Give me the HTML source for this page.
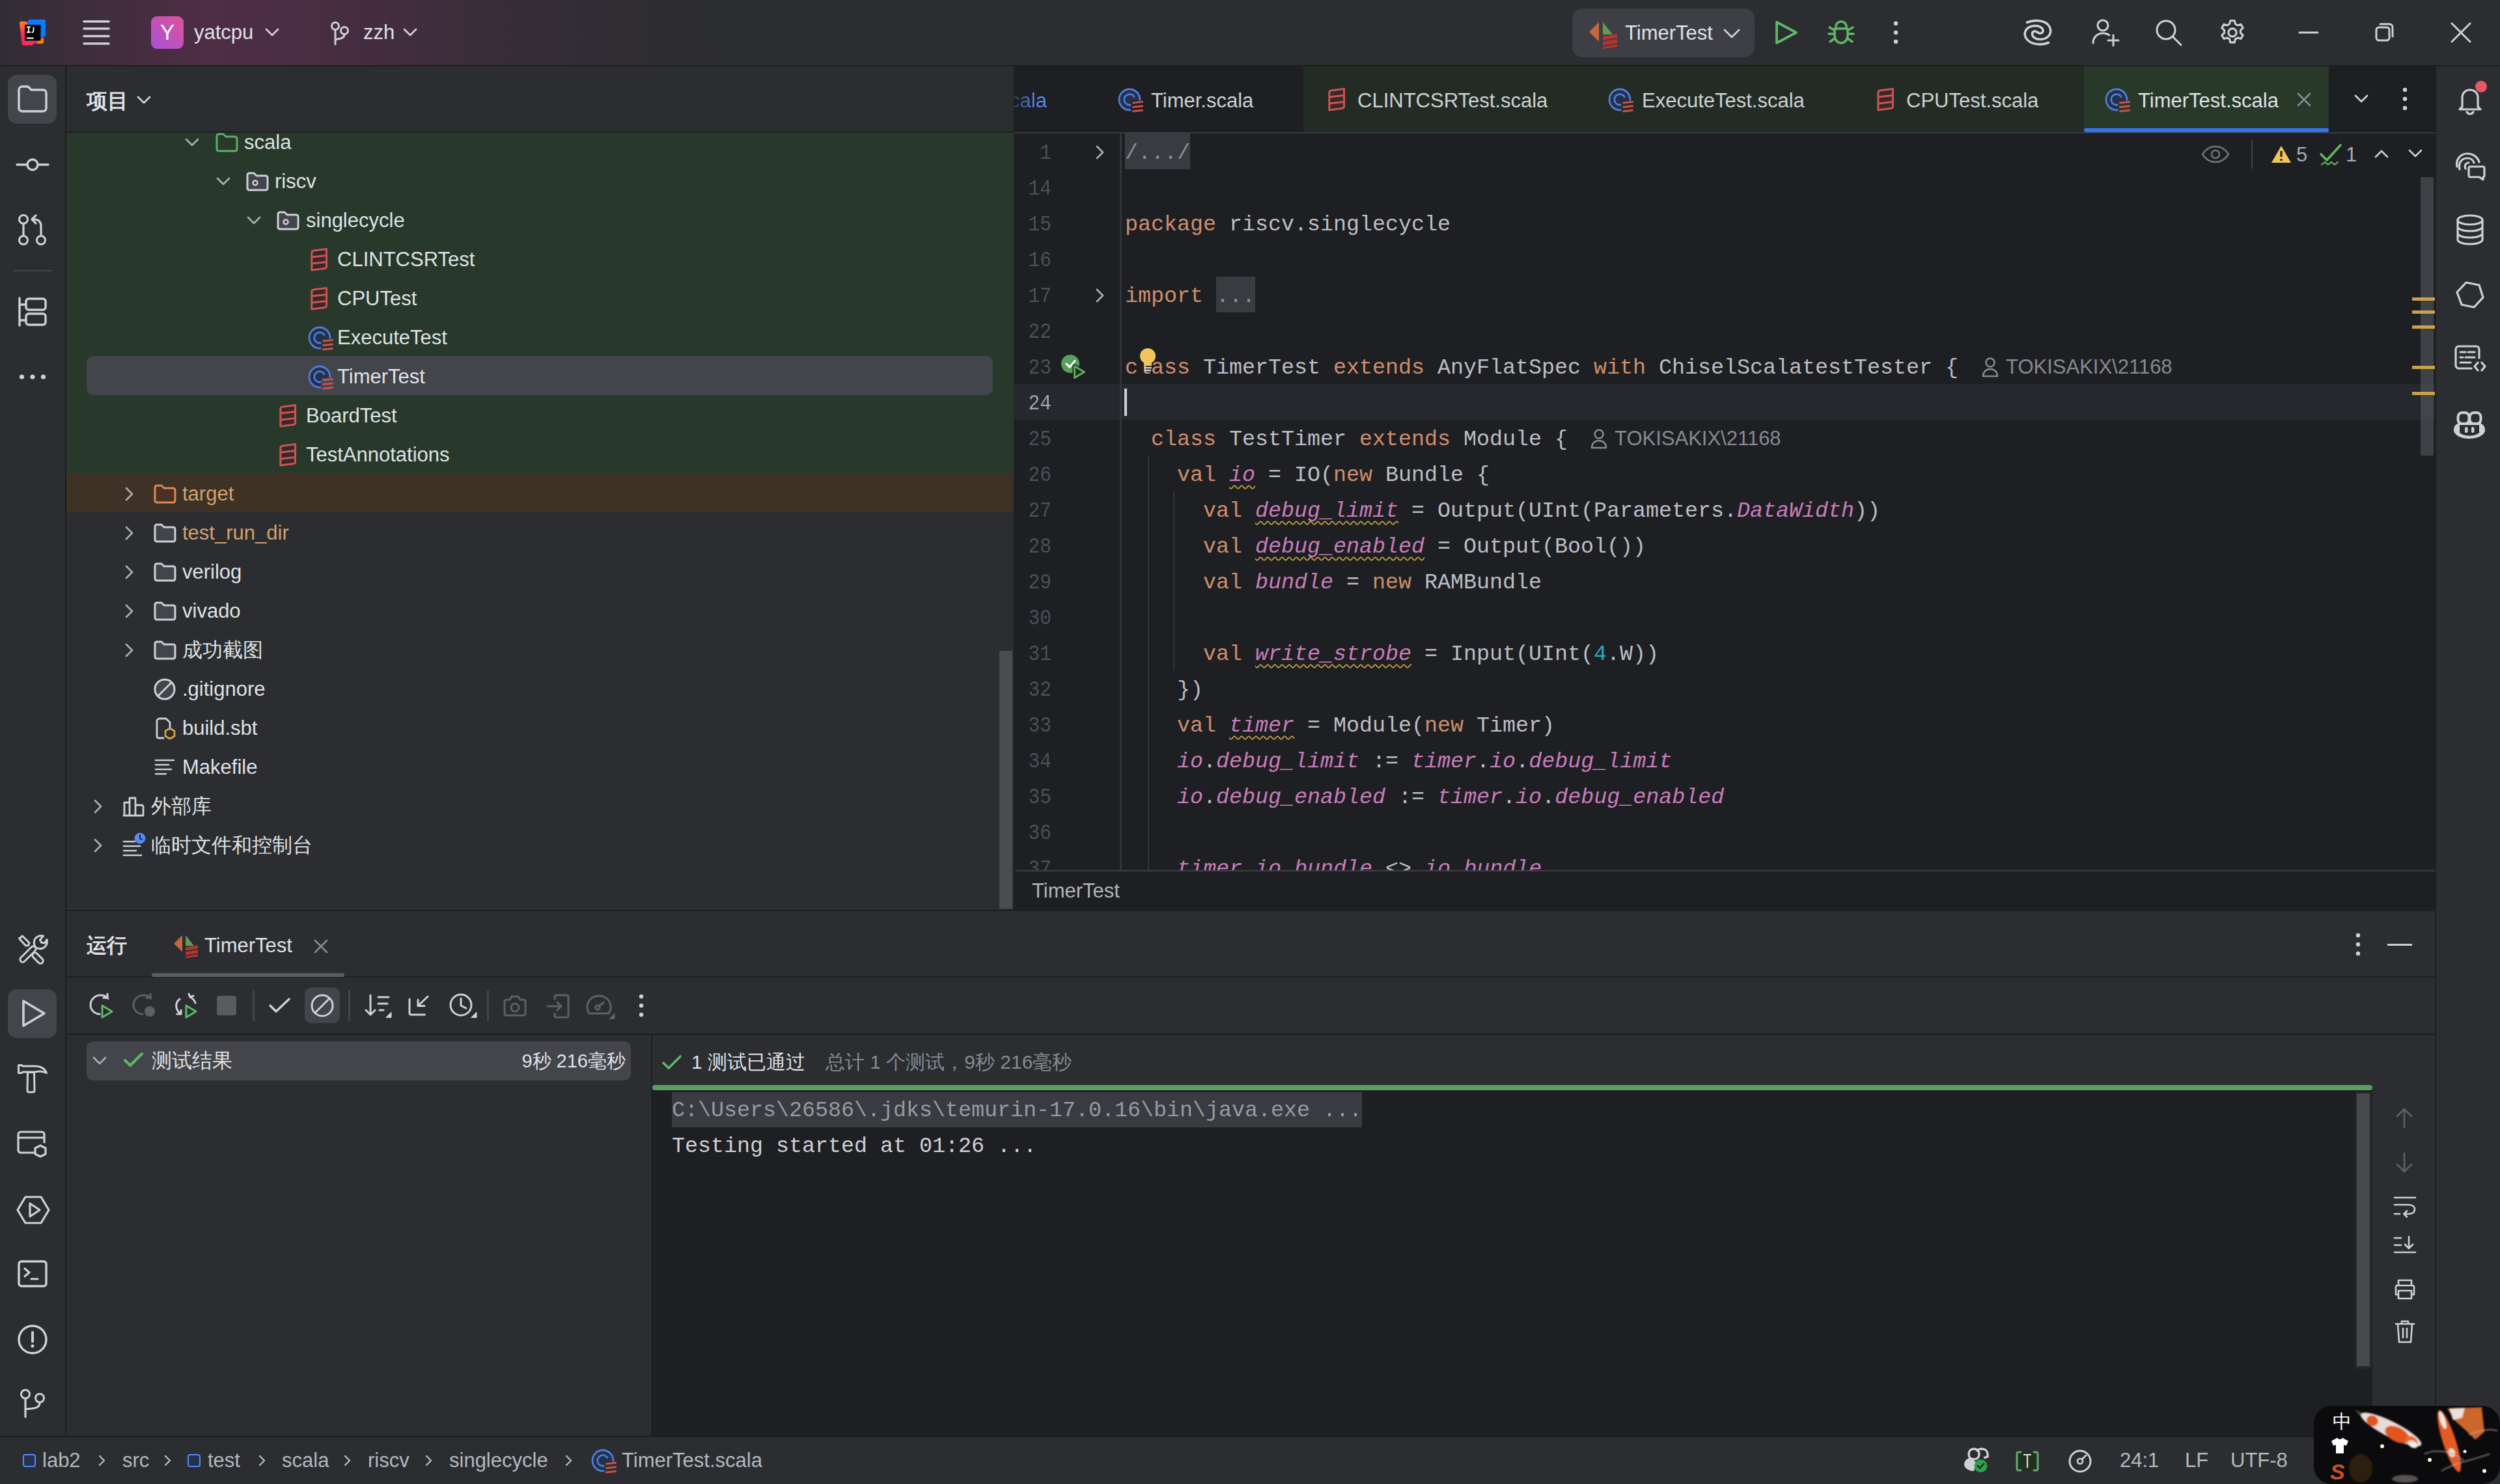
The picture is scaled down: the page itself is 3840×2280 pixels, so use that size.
<!DOCTYPE html><html><head><meta charset="utf-8"><style>
*{margin:0;padding:0;box-sizing:border-box}
html,body{width:3840px;height:2280px;overflow:hidden;background:#2B2D30}
body{position:relative;font-family:"Liberation Sans",sans-serif;color:#DFE1E5}
div,svg,span.a{position:absolute}
.t{white-space:pre}
.m{font-family:"Liberation Mono",monospace;white-space:pre}
</style></head><body><div style="left:0px;top:0px;width:3840px;height:100px;background:#2B2D30;"></div><div style="left:0px;top:0px;width:1300px;height:100px;background:linear-gradient(90deg, rgba(100,45,85,0.12) 0px, rgba(105,45,88,0.30) 130px, rgba(110,45,90,0.52) 320px, rgba(105,45,88,0.45) 520px, rgba(95,45,80,0.25) 760px, rgba(80,45,70,0.08) 1000px, rgba(43,45,48,0) 1150px);"></div><div style="left:0px;top:100px;width:3840px;height:2px;background:#1E1F22;"></div><div style="left:0px;top:102px;width:100px;height:2106px;background:#2B2D30;"></div><div style="left:100px;top:102px;width:2px;height:2106px;background:#1E1F22;"></div><div style="left:102px;top:102px;width:1455px;height:1296px;background:#2B2D30;"></div><div style="left:102px;top:202px;width:1455px;height:2px;background:#1E1F22;"></div><div style="left:102px;top:204px;width:1455px;height:523px;background:#28382B;"></div><div style="left:102px;top:727px;width:1455px;height:60px;background:#3D3225;"></div><div style="left:1557px;top:102px;width:2185px;height:1234px;background:#1E1F22;"></div><div style="left:1557px;top:203px;width:2183px;height:2px;background:#393B40;"></div><div style="left:2002px;top:102px;width:1575px;height:101px;background:#232C24;"></div><div style="left:3201px;top:102px;width:376px;height:101px;background:#283829;"></div><div style="left:3201px;top:197px;width:376px;height:6px;background:#3574F0;border-radius:3px"></div><div style="left:1557px;top:1337px;width:2183px;height:61px;background:#1E1F22;"></div><div style="left:1560px;top:1337px;width:2180px;height:2px;background:#393B40;"></div><div style="left:3740px;top:102px;width:2px;height:2106px;background:#1E1F22;"></div><div style="left:3742px;top:102px;width:98px;height:2106px;background:#2B2D30;"></div><div style="left:102px;top:1398px;width:3638px;height:2px;background:#1E1F22;"></div><div style="left:102px;top:1400px;width:3638px;height:808px;background:#2B2D30;"></div><div style="left:102px;top:1500px;width:3638px;height:2px;background:#1E1F22;"></div><div style="left:102px;top:1588px;width:3638px;height:2px;background:#1E1F22;"></div><div style="left:1000px;top:1590px;width:2px;height:618px;background:#1E1F22;"></div><div style="left:1002px;top:1675px;width:2642px;height:533px;background:#1E1F22;"></div><div style="left:1002px;top:1667px;width:2642px;height:8px;background:#5B9E62;border-radius:4px"></div><div style="left:0px;top:2206px;width:3840px;height:2px;background:#1E1F22;"></div><div style="left:0px;top:2208px;width:3840px;height:72px;background:#2B2D30;"></div><svg style="left:20px;top:20px" width="60" height="60" viewBox="0 0 60 60">
<defs><linearGradient id="lg1" x1="0" y1="0" x2="0.3" y2="1"><stop offset="0" stop-color="#FF8A1E"/><stop offset="0.55" stop-color="#FF2D55"/><stop offset="1" stop-color="#FF2458"/></linearGradient>
<linearGradient id="lg2" x1="1" y1="0" x2="0" y2="1"><stop offset="0.5" stop-color="#087CFA"/><stop offset="1" stop-color="#8D5BD0"/></linearGradient></defs>
<path d="M12 13H20C21.5 13 22 14 22 15L30 49.5H16C14.5 49.5 14 49 13.8 47.5L10 15.5C10 14 10.8 13 12 13Z" fill="url(#lg1)"/>
<path d="M26 10H48C49.2 10 50 10.8 50 12V35L29 48L18 44L23 13C23.3 11 24.5 10 26 10Z" fill="url(#lg2)"/>
<path d="M47 38V44.5C47 46 46 47 44.5 47H35L40 41Z" fill="#FF8100"/>
<path d="M22 44L46.5 37.5L29 49.5H16Z" fill="#FF2D55" opacity="0.9"/>
<rect x="18" y="18" width="24.5" height="24.5" fill="#000"/>
<path d="M21 21.5H27M24 21.5V29.5M21 29.5H27M31.5 21.5V27C31.5 29 30.5 29.8 28.5 29.8" stroke="#fff" stroke-width="1.8" fill="none"/>
<rect x="21" y="37.5" width="10.5" height="2.2" fill="#fff"/>
</svg><svg style="left:124px;top:28px;" width="48" height="44" viewBox="0 0 48 44" fill="none" stroke="#CED0D6" stroke-width="3" stroke-linecap="round" stroke-linejoin="round"><path d="M5 5H43M5 16H43M5 27.5H43M5 39H43" stroke-width="3.5"/></svg><div style="left:232px;top:25px;width:50px;height:50px;border-radius:9px;background:linear-gradient(45deg,#A552D8,#E0529A);color:#fff;font-size:33px;line-height:50px;text-align:center">Y</div><div class="t" style="left:298px;top:20px;height:60px;line-height:60px;font-size:31px;color:#DFE1E5;">yatcpu</div><svg style="left:404px;top:40px;" width="28" height="20" viewBox="0 0 28 20" fill="none" stroke="#CED0D6" stroke-width="3" stroke-linecap="round" stroke-linejoin="round"><path d="M5 5L14 14L23 5" stroke-width="2.8"/></svg><svg style="left:503px;top:31px;" width="36" height="40" viewBox="0 0 36 40" fill="none" stroke="#CED0D6" stroke-width="3" stroke-linecap="round" stroke-linejoin="round"><circle cx="12" cy="9" r="5.5"/><circle cx="26" cy="16" r="5.5"/><path d="M12 15V37M26 22C26 28 20 28 12 30" /></svg><div class="t" style="left:558px;top:20px;height:60px;line-height:60px;font-size:31px;color:#DFE1E5;">zzh</div><svg style="left:616px;top:40px;" width="28" height="20" viewBox="0 0 28 20" fill="none" stroke="#CED0D6" stroke-width="3" stroke-linecap="round" stroke-linejoin="round"><path d="M5 5L14 14L23 5" stroke-width="2.8"/></svg><div style="left:2415px;top:13px;width:280px;height:75px;background:#3D3F44;border-radius:16px"></div><svg style="left:2440px;top:33px" width="46" height="42" viewBox="0 0 46 42">
<path d="M16 1 L16 31 L1 16 Z" fill="#C5673C"/>
<path d="M22 1 L22 20 L37 20 Z" fill="#5F9D4F"/>
<path d="M22 23 L44 19 L44 25 L22 29Z M22 31 L44 27 L44 33 L22 37Z M22 39 L44 35 L44 39 L22 42Z" fill="#B5342F"/>
</svg><div class="t" style="left:2496px;top:21px;height:60px;line-height:60px;font-size:31px;color:#DFE1E5;">TimerTest</div><svg style="left:2645px;top:40px;" width="32" height="24" viewBox="0 0 32 24" fill="none" stroke="#CED0D6" stroke-width="3" stroke-linecap="round" stroke-linejoin="round"><path d="M4 6L15 17L26 6" stroke-width="2.8"/></svg><svg style="left:2722px;top:28px;" width="44" height="44" viewBox="0 0 44 44" fill="none" stroke="#CED0D6" stroke-width="3" stroke-linecap="round" stroke-linejoin="round"><path d="M7 6V38L37 22Z" stroke="#5FB865" stroke-width="3.8"/></svg><svg style="left:2806px;top:28px;" width="44" height="44" viewBox="0 0 44 44" fill="none" stroke="#CED0D6" stroke-width="3" stroke-linecap="round" stroke-linejoin="round"><path d="M14 13C14 8 18 5 22 5C26 5 30 8 30 13M12 16H32V26C32 33 28 38 22 38C16 38 12 33 12 26Z M4 14L11 18M40 14L33 18M3 24H11M41 24H33M5 36L12 31M39 36L32 31" stroke="#5FB865" stroke-width="3.5"/></svg><svg style="left:2900px;top:28px" width="24" height="44"><circle cx="12" cy="8" r="3.2" fill="#CED0D6"/><circle cx="12" cy="22" r="3.2" fill="#CED0D6"/><circle cx="12" cy="36" r="3.2" fill="#CED0D6"/></svg><svg style="left:3100px;top:20px" width="60" height="60" fill="none" stroke="#CED0D6" stroke-width="3.6" stroke-linecap="round"><path d="M13.5 14.5C24 10 42 10 48 21C53 31 46 40 35 40.5C27 41 21.5 37 21.5 32C21.5 28 25 27 30 29.5"/><path d="M46.5 45.5C37 50 20 49 13 40C7 32 11 22 22 20C31 18.5 38 22 38 27C38 31 34 32.5 30 30"/></svg><svg style="left:3210px;top:26px;" width="48" height="48" viewBox="0 0 48 48" fill="none" stroke="#CED0D6" stroke-width="3" stroke-linecap="round" stroke-linejoin="round"><circle cx="20" cy="13" r="8"/><path d="M5 40C5 31 12 25 20 25C24 25 27 26 30 28M36 28V44M28 36H44"/></svg><svg style="left:3308px;top:27px;" width="46" height="46" viewBox="0 0 46 46" fill="none" stroke="#CED0D6" stroke-width="3" stroke-linecap="round" stroke-linejoin="round"><circle cx="19" cy="19" r="14"/><path d="M29 29L42 42"/></svg><svg style="left:3406px;top:26px;display:none" width="48" height="48" viewBox="0 0 48 48" fill="none" stroke="#CED0D6" stroke-width="3" stroke-linecap="round" stroke-linejoin="round"><path d="M24 5L29 5L31 10L36 12L41 9L44 13L41 18L43 23L48 25L48 29"/></svg><svg style="left:3406px;top:27px" width="46" height="46" viewBox="0 0 24 24" fill="none" stroke="#CED0D6" stroke-width="1.6" stroke-linejoin="round"><path d="M10.3 2.5h3.4l.6 2.6 1.9 1.1 2.6-.8 1.7 2.9-2 1.8v2.2l2 1.8-1.7 2.9-2.6-.8-1.9 1.1-.6 2.6h-3.4l-.6-2.6-1.9-1.1-2.6.8-1.7-2.9 2-1.8v-2.2l-2-1.8 1.7-2.9 2.6.8 1.9-1.1z"/><circle cx="12" cy="12" r="3.2"/></svg><svg style="left:3526px;top:30px;" width="40" height="40" viewBox="0 0 40 40" fill="none" stroke="#CED0D6" stroke-width="3" stroke-linecap="round" stroke-linejoin="round"><path d="M6 20H34" stroke-width="3"/></svg><svg style="left:3642px;top:30px;" width="40" height="40" viewBox="0 0 40 40" fill="none" stroke="#CED0D6" stroke-width="3" stroke-linecap="round" stroke-linejoin="round"><rect x="8" y="12" width="20" height="20" rx="4"/><path d="M14 7H28C31 7 33 9 33 12V26"/></svg><svg style="left:3760px;top:30px;" width="40" height="40" viewBox="0 0 40 40" fill="none" stroke="#CED0D6" stroke-width="3" stroke-linecap="round" stroke-linejoin="round"><path d="M6 6L34 34M34 6L6 34" stroke-width="3"/></svg><div style="left:12px;top:115px;width:75px;height:75px;background:#43454A;border-radius:14px"></div><svg style="left:26px;top:130px;" width="48" height="44" viewBox="0 0 48 44" fill="none" stroke="#CED0D6" stroke-width="3" stroke-linecap="round" stroke-linejoin="round"><path d="M3 8C3 5.2 5.2 3 8 3H17L22 8H40C42.8 8 45 10.2 45 13V36C45 38.8 42.8 41 40 41H8C5.2 41 3 38.8 3 36Z" stroke-width="3.4"/></svg><svg style="left:24px;top:237px;" width="52" height="32" viewBox="0 0 52 32" fill="none" stroke="#CED0D6" stroke-width="3" stroke-linecap="round" stroke-linejoin="round"><circle cx="26" cy="16" r="8" stroke-width="3.4"/><path d="M2 16H18M34 16H50" stroke-width="3.4"/></svg><svg style="left:26px;top:327px;" width="48" height="52" viewBox="0 0 48 52" fill="none" stroke="#CED0D6" stroke-width="3" stroke-linecap="round" stroke-linejoin="round"><circle cx="10" cy="10" r="6.5"/><circle cx="10" cy="42" r="6.5"/><circle cx="37" cy="42" r="6.5"/><path d="M10 17V35M37 35V20C37 14 33 10 27 10H24M29 4L23 10L29 16" stroke-width="3.2"/></svg><div style="left:20px;top:415px;width:60px;height:2px;background:#43454A;"></div><svg style="left:27px;top:455px;" width="46" height="48" viewBox="0 0 46 48" fill="none" stroke="#CED0D6" stroke-width="3" stroke-linecap="round" stroke-linejoin="round"><path d="M3 3V45M3 13H11M3 37H11" stroke-width="3.4"/><rect x="13" y="4" width="30" height="17" rx="4" stroke-width="3.4"/><rect x="13" y="27" width="30" height="17" rx="4" stroke-width="3.4"/></svg><svg style="left:26px;top:571px" width="50" height="16"><circle cx="7.5" cy="8" r="3.6" fill="#CED0D6"/><circle cx="24" cy="8" r="3.6" fill="#CED0D6"/><circle cx="40.5" cy="8" r="3.6" fill="#CED0D6"/></svg><svg style="left:20px;top:1425px;" width="60" height="60" viewBox="0 0 60 60" fill="none" stroke="#CED0D6" stroke-width="3" stroke-linecap="round" stroke-linejoin="round"><rect x="7.5" y="37" width="31" height="8" rx="4" transform="rotate(-45 23 41)" stroke-width="3"/><rect x="28" y="43" width="20" height="8" rx="4" transform="rotate(45 38 47)" stroke-width="3"/><path d="M9.5 17L14.5 13L25 23.5L23.5 27.5L19.5 28Z" stroke-width="3"/><path d="M34.5 30C31 25 31.5 18 37 14.5C40 12.5 43.5 12 46.5 13L41.5 19L43.5 23L48.5 24L52 18.5C53.5 23.5 51.5 29 46.5 31.5C43 33 39 33 35.5 31" stroke-width="3"/></svg><div style="left:12px;top:1520px;width:75px;height:75px;background:#43454A;border-radius:14px"></div><svg style="left:26px;top:1533px;" width="48" height="48" viewBox="0 0 48 48" fill="none" stroke="#CED0D6" stroke-width="3" stroke-linecap="round" stroke-linejoin="round"><path d="M10 5V43L42 24Z" stroke-width="3.6"/></svg><svg style="left:20px;top:1625px;" width="60" height="60" viewBox="0 0 60 60" fill="none" stroke="#CED0D6" stroke-width="3" stroke-linecap="round" stroke-linejoin="round"><path d="M8.5 11.5H13L15 13H33C43 13 49 17 51.5 23.5C46 21 41 20.5 36 21.5L33 22H15L13 23.5H8.5Z" stroke-width="3"/><path d="M22.5 22.5H32.5L33 50C33 52 32.5 53 30.5 53H24.5C22.5 53 22 52 22 50Z" stroke-width="3"/></svg><svg style="left:24px;top:1733px;" width="54" height="52" viewBox="0 0 54 52" fill="none" stroke="#CED0D6" stroke-width="3" stroke-linecap="round" stroke-linejoin="round"><path d="M30 38H8C5.8 38 4 36.2 4 34V10C4 7.8 5.8 6 8 6H40C42.2 6 44 7.8 44 10V22M4 15H44" stroke-width="3.2"/><path d="M38 27L46 31V40L38 44L30 40V31Z" stroke-width="3.2"/></svg><svg style="left:24px;top:1833px;" width="54" height="52" viewBox="0 0 54 52" fill="none" stroke="#CED0D6" stroke-width="3" stroke-linecap="round" stroke-linejoin="round"><path d="M15 6H39L51 26L39 46H15L3 26Z" stroke-width="3.2"/><path d="M22 16V36L37 26Z" stroke-width="3.2"/></svg><svg style="left:26px;top:1935px;" width="48" height="46" viewBox="0 0 48 46" fill="none" stroke="#CED0D6" stroke-width="3" stroke-linecap="round" stroke-linejoin="round"><rect x="3" y="3" width="42" height="38" rx="4" stroke-width="3.4"/><path d="M12 14L19 20L12 26M22 30H32" stroke-width="3.2"/></svg><svg style="left:26px;top:2033px;" width="48" height="50" viewBox="0 0 48 50" fill="none" stroke="#CED0D6" stroke-width="3" stroke-linecap="round" stroke-linejoin="round"><circle cx="24" cy="25" r="21" stroke-width="3.4"/><path d="M24 14V28" stroke-width="4"/><circle cx="24" cy="35" r="1.5" fill="#CED0D6" stroke-width="2"/></svg><svg style="left:30px;top:2133px;" width="42" height="48" viewBox="0 0 42 48" fill="none" stroke="#CED0D6" stroke-width="3" stroke-linecap="round" stroke-linejoin="round"><circle cx="9" cy="9" r="6.5"/><circle cx="31" cy="15" r="6.5"/><path d="M9 16V44M31 22C31 30 24 31 9 32" stroke-width="3.2"/></svg><div class="t" style="left:133px;top:125px;height:60px;line-height:60px;font-size:32px;color:#DFE1E5;font-weight:bold">项目</div><svg style="left:209px;top:146px;" width="24" height="16" viewBox="0 0 24 16" fill="none" stroke="#CED0D6" stroke-width="3" stroke-linecap="round" stroke-linejoin="round"><path d="M3 3L12 12L21 3" stroke="#CED0D6" stroke-width="2.8"/></svg><div style="left:133px;top:547px;width:1392px;height:60px;background:#43454A;border-radius:10px"></div><div style="left:102px;top:204px;width:1433px;height:1194px;overflow:hidden"><svg style="left:181px;top:7px;" width="24" height="16" viewBox="0 0 24 16" fill="none" stroke="#CED0D6" stroke-width="3" stroke-linecap="round" stroke-linejoin="round"><path d="M3 3L12 12L21 3" stroke="#A8ADB5" stroke-width="2.8"/></svg><svg style="left:228px;top:-1px;" width="37" height="32" viewBox="0 0 37 32" fill="none" stroke="#CED0D6" stroke-width="3" stroke-linecap="round" stroke-linejoin="round"><path d="M3 6C3 4.3 4.3 3 6 3H13L17 7H31C32.7 7 34 8.3 34 10V26C34 27.7 32.7 29 31 29H6C4.3 29 3 27.7 3 26Z" fill="none" stroke="#5FAD65" stroke-width="3"/></svg><div class="t" style="left:273px;top:-15px;height:60px;line-height:60px;font-size:31px;color:#DFE1E5;">scala</div><svg style="left:229px;top:67px;" width="24" height="16" viewBox="0 0 24 16" fill="none" stroke="#CED0D6" stroke-width="3" stroke-linecap="round" stroke-linejoin="round"><path d="M3 3L12 12L21 3" stroke="#A8ADB5" stroke-width="2.8"/></svg><svg style="left:275px;top:59px;" width="37" height="32" viewBox="0 0 37 32" fill="none" stroke="#CED0D6" stroke-width="3" stroke-linecap="round" stroke-linejoin="round"><path d="M3 6C3 4.3 4.3 3 6 3H13L17 7H31C32.7 7 34 8.3 34 10V26C34 27.7 32.7 29 31 29H6C4.3 29 3 27.7 3 26Z" fill="#43454A" stroke="#CED0D6" stroke-width="3"/><circle cx="15" cy="18" r="3.5" stroke="#CED0D6" stroke-width="2.5"/></svg><div class="t" style="left:320px;top:45px;height:60px;line-height:60px;font-size:31px;color:#DFE1E5;">riscv</div><svg style="left:276px;top:127px;" width="24" height="16" viewBox="0 0 24 16" fill="none" stroke="#CED0D6" stroke-width="3" stroke-linecap="round" stroke-linejoin="round"><path d="M3 3L12 12L21 3" stroke="#A8ADB5" stroke-width="2.8"/></svg><svg style="left:322px;top:119px;" width="37" height="32" viewBox="0 0 37 32" fill="none" stroke="#CED0D6" stroke-width="3" stroke-linecap="round" stroke-linejoin="round"><path d="M3 6C3 4.3 4.3 3 6 3H13L17 7H31C32.7 7 34 8.3 34 10V26C34 27.7 32.7 29 31 29H6C4.3 29 3 27.7 3 26Z" fill="#43454A" stroke="#CED0D6" stroke-width="3"/><circle cx="15" cy="18" r="3.5" stroke="#CED0D6" stroke-width="2.5"/></svg><div class="t" style="left:368px;top:105px;height:60px;line-height:60px;font-size:31px;color:#DFE1E5;">singlecycle</div><svg style="left:365px;top:172px;" width="46" height="46" viewBox="0 0 46 46" fill="none" stroke="#CED0D6" stroke-width="3" stroke-linecap="round" stroke-linejoin="round"><path d="M11.8 39V12.5Q11.8 9.3 15 9L34.5 6.6V33Q34.5 36.2 31.3 36.5Z" fill="#3A2828" stroke="#C95553" stroke-width="3"/><path d="M11.8 19L34.5 16.4M11.8 29L34.5 26.6" stroke="#C95553" stroke-width="3" stroke-linecap="butt"/></svg><div class="t" style="left:416px;top:165px;height:60px;line-height:60px;font-size:31px;color:#DFE1E5;">CLINTCSRTest</div><svg style="left:365px;top:232px;" width="46" height="46" viewBox="0 0 46 46" fill="none" stroke="#CED0D6" stroke-width="3" stroke-linecap="round" stroke-linejoin="round"><path d="M11.8 39V12.5Q11.8 9.3 15 9L34.5 6.6V33Q34.5 36.2 31.3 36.5Z" fill="#3A2828" stroke="#C95553" stroke-width="3"/><path d="M11.8 19L34.5 16.4M11.8 29L34.5 26.6" stroke="#C95553" stroke-width="3" stroke-linecap="butt"/></svg><div class="t" style="left:416px;top:225px;height:60px;line-height:60px;font-size:31px;color:#DFE1E5;">CPUTest</div><svg style="left:366px;top:292px;" width="46" height="46" viewBox="0 0 46 46" fill="none" stroke="#CED0D6" stroke-width="3" stroke-linecap="round" stroke-linejoin="round"><path d="M38.9 24.4A16 16 0 1 0 25.5 38.8L25.5 24.4Z" fill="#25304A" stroke="none"/><path d="M38.9 24.4A16 16 0 1 0 25.5 38.8" stroke="#4F7DDA" stroke-width="2.8" stroke-linecap="butt"/><path d="M30.6 19.6A8.3 8.3 0 1 0 25.3 30.9" stroke="#4F7DDA" stroke-width="2.8" stroke-linecap="butt"/><path d="M28.5 28L42.5 26.5M28.5 34.5L42.5 33M28.5 41L42.5 39.5" stroke="#C9514F" stroke-width="3"/></svg><div class="t" style="left:416px;top:285px;height:60px;line-height:60px;font-size:31px;color:#DFE1E5;">ExecuteTest</div><svg style="left:366px;top:352px;" width="46" height="46" viewBox="0 0 46 46" fill="none" stroke="#CED0D6" stroke-width="3" stroke-linecap="round" stroke-linejoin="round"><path d="M38.9 24.4A16 16 0 1 0 25.5 38.8L25.5 24.4Z" fill="#25304A" stroke="none"/><path d="M38.9 24.4A16 16 0 1 0 25.5 38.8" stroke="#4F7DDA" stroke-width="2.8" stroke-linecap="butt"/><path d="M30.6 19.6A8.3 8.3 0 1 0 25.3 30.9" stroke="#4F7DDA" stroke-width="2.8" stroke-linecap="butt"/><path d="M28.5 28L42.5 26.5M28.5 34.5L42.5 33M28.5 41L42.5 39.5" stroke="#C9514F" stroke-width="3"/></svg><div class="t" style="left:416px;top:345px;height:60px;line-height:60px;font-size:31px;color:#DFE1E5;">TimerTest</div><svg style="left:317px;top:412px;" width="46" height="46" viewBox="0 0 46 46" fill="none" stroke="#CED0D6" stroke-width="3" stroke-linecap="round" stroke-linejoin="round"><path d="M11.8 39V12.5Q11.8 9.3 15 9L34.5 6.6V33Q34.5 36.2 31.3 36.5Z" fill="#3A2828" stroke="#C95553" stroke-width="3"/><path d="M11.8 19L34.5 16.4M11.8 29L34.5 26.6" stroke="#C95553" stroke-width="3" stroke-linecap="butt"/></svg><div class="t" style="left:368px;top:405px;height:60px;line-height:60px;font-size:31px;color:#DFE1E5;">BoardTest</div><svg style="left:317px;top:472px;" width="46" height="46" viewBox="0 0 46 46" fill="none" stroke="#CED0D6" stroke-width="3" stroke-linecap="round" stroke-linejoin="round"><path d="M11.8 39V12.5Q11.8 9.3 15 9L34.5 6.6V33Q34.5 36.2 31.3 36.5Z" fill="#3A2828" stroke="#C95553" stroke-width="3"/><path d="M11.8 19L34.5 16.4M11.8 29L34.5 26.6" stroke="#C95553" stroke-width="3" stroke-linecap="butt"/></svg><div class="t" style="left:368px;top:465px;height:60px;line-height:60px;font-size:31px;color:#DFE1E5;">TestAnnotations</div><svg style="left:89px;top:543px;" width="16" height="24" viewBox="0 0 16 24" fill="none" stroke="#CED0D6" stroke-width="3" stroke-linecap="round" stroke-linejoin="round"><path d="M3 3L12 12L3 21" stroke="#A8ADB5" stroke-width="2.8"/></svg><svg style="left:133px;top:539px;" width="37" height="32" viewBox="0 0 37 32" fill="none" stroke="#CED0D6" stroke-width="3" stroke-linecap="round" stroke-linejoin="round"><path d="M3 6C3 4.3 4.3 3 6 3H13L17 7H31C32.7 7 34 8.3 34 10V26C34 27.7 32.7 29 31 29H6C4.3 29 3 27.7 3 26Z" fill="#4A3025" stroke="#E08855" stroke-width="3"/></svg><div class="t" style="left:178px;top:525px;height:60px;line-height:60px;font-size:31px;color:#D5A06D;">target</div><svg style="left:89px;top:603px;" width="16" height="24" viewBox="0 0 16 24" fill="none" stroke="#CED0D6" stroke-width="3" stroke-linecap="round" stroke-linejoin="round"><path d="M3 3L12 12L3 21" stroke="#A8ADB5" stroke-width="2.8"/></svg><svg style="left:133px;top:599px;" width="37" height="32" viewBox="0 0 37 32" fill="none" stroke="#CED0D6" stroke-width="3" stroke-linecap="round" stroke-linejoin="round"><path d="M3 6C3 4.3 4.3 3 6 3H13L17 7H31C32.7 7 34 8.3 34 10V26C34 27.7 32.7 29 31 29H6C4.3 29 3 27.7 3 26Z" fill="#43454A" stroke="#CED0D6" stroke-width="3"/></svg><div class="t" style="left:178px;top:585px;height:60px;line-height:60px;font-size:31px;color:#D5A06D;">test_run_dir</div><svg style="left:89px;top:663px;" width="16" height="24" viewBox="0 0 16 24" fill="none" stroke="#CED0D6" stroke-width="3" stroke-linecap="round" stroke-linejoin="round"><path d="M3 3L12 12L3 21" stroke="#A8ADB5" stroke-width="2.8"/></svg><svg style="left:133px;top:659px;" width="37" height="32" viewBox="0 0 37 32" fill="none" stroke="#CED0D6" stroke-width="3" stroke-linecap="round" stroke-linejoin="round"><path d="M3 6C3 4.3 4.3 3 6 3H13L17 7H31C32.7 7 34 8.3 34 10V26C34 27.7 32.7 29 31 29H6C4.3 29 3 27.7 3 26Z" fill="#43454A" stroke="#CED0D6" stroke-width="3"/></svg><div class="t" style="left:178px;top:645px;height:60px;line-height:60px;font-size:31px;color:#DFE1E5;">verilog</div><svg style="left:89px;top:723px;" width="16" height="24" viewBox="0 0 16 24" fill="none" stroke="#CED0D6" stroke-width="3" stroke-linecap="round" stroke-linejoin="round"><path d="M3 3L12 12L3 21" stroke="#A8ADB5" stroke-width="2.8"/></svg><svg style="left:133px;top:719px;" width="37" height="32" viewBox="0 0 37 32" fill="none" stroke="#CED0D6" stroke-width="3" stroke-linecap="round" stroke-linejoin="round"><path d="M3 6C3 4.3 4.3 3 6 3H13L17 7H31C32.7 7 34 8.3 34 10V26C34 27.7 32.7 29 31 29H6C4.3 29 3 27.7 3 26Z" fill="#43454A" stroke="#CED0D6" stroke-width="3"/></svg><div class="t" style="left:178px;top:705px;height:60px;line-height:60px;font-size:31px;color:#DFE1E5;">vivado</div><svg style="left:89px;top:783px;" width="16" height="24" viewBox="0 0 16 24" fill="none" stroke="#CED0D6" stroke-width="3" stroke-linecap="round" stroke-linejoin="round"><path d="M3 3L12 12L3 21" stroke="#A8ADB5" stroke-width="2.8"/></svg><svg style="left:133px;top:779px;" width="37" height="32" viewBox="0 0 37 32" fill="none" stroke="#CED0D6" stroke-width="3" stroke-linecap="round" stroke-linejoin="round"><path d="M3 6C3 4.3 4.3 3 6 3H13L17 7H31C32.7 7 34 8.3 34 10V26C34 27.7 32.7 29 31 29H6C4.3 29 3 27.7 3 26Z" fill="#43454A" stroke="#CED0D6" stroke-width="3"/></svg><div class="t" style="left:178px;top:765px;height:60px;line-height:60px;font-size:31px;color:#DFE1E5;">成功截图</div><svg style="left:133px;top:837px;" width="36" height="36" viewBox="0 0 36 36" fill="none" stroke="#CED0D6" stroke-width="3" stroke-linecap="round" stroke-linejoin="round"><circle cx="18" cy="18" r="15" fill="#43454A" stroke-width="3"/><path d="M8 28L28 8" stroke-width="3"/></svg><div class="t" style="left:178px;top:825px;height:60px;line-height:60px;font-size:31px;color:#DFE1E5;">.gitignore</div><svg style="left:133px;top:896px;" width="38" height="38" viewBox="0 0 38 38" fill="none" stroke="#CED0D6" stroke-width="3" stroke-linecap="round" stroke-linejoin="round"><path d="M10 4H20L26 10V20M16 34H9C7.3 34 6 32.7 6 31V8C6 5.8 7.8 4 10 4" stroke-width="2.8"/><path d="M26 19L33 23V31L26 35L19 31V23Z" stroke="#D6A84A" stroke-width="2.6"/></svg><div class="t" style="left:178px;top:885px;height:60px;line-height:60px;font-size:31px;color:#DFE1E5;">build.sbt</div><svg style="left:133px;top:959px;" width="36" height="32" viewBox="0 0 36 32" fill="none" stroke="#CED0D6" stroke-width="3" stroke-linecap="round" stroke-linejoin="round"><path d="M4 5H32M4 12H24M4 19H28M4 26H20" stroke-width="2.6"/></svg><div class="t" style="left:178px;top:945px;height:60px;line-height:60px;font-size:31px;color:#DFE1E5;">Makefile</div><svg style="left:41px;top:1023px;" width="16" height="24" viewBox="0 0 16 24" fill="none" stroke="#CED0D6" stroke-width="3" stroke-linecap="round" stroke-linejoin="round"><path d="M3 3L12 12L3 21" stroke="#A8ADB5" stroke-width="2.8"/></svg><svg style="left:85px;top:1018px;" width="36" height="34" viewBox="0 0 36 34" fill="none" stroke="#CED0D6" stroke-width="3" stroke-linecap="round" stroke-linejoin="round"><path d="M3 31H33M4 31V11H12V31M12 31V4H21V31M21 31V15H31C32 15 33 16 33 17V31" stroke-width="2.8"/></svg><div class="t" style="left:130px;top:1005px;height:60px;line-height:60px;font-size:31px;color:#DFE1E5;">外部库</div><svg style="left:41px;top:1083px;" width="16" height="24" viewBox="0 0 16 24" fill="none" stroke="#CED0D6" stroke-width="3" stroke-linecap="round" stroke-linejoin="round"><path d="M3 3L12 12L3 21" stroke="#A8ADB5" stroke-width="2.8"/></svg><svg style="left:85px;top:1075px;" width="40" height="38" viewBox="0 0 40 38" fill="none" stroke="#CED0D6" stroke-width="3" stroke-linecap="round" stroke-linejoin="round"><path d="M3 14H20M3 21H28M3 28H22M3 35H30" stroke-width="2.6"/><circle cx="28" cy="9" r="8" fill="#548AF7" stroke="#548AF7" stroke-width="1"/><path d="M28 4V9L31 11" stroke="#1E1F22" stroke-width="2"/></svg><div class="t" style="left:130px;top:1065px;height:60px;line-height:60px;font-size:31px;color:#DFE1E5;">临时文件和控制台</div></div><div style="left:1535px;top:1000px;width:20px;height:396px;background:#4A4C50;"></div><div style="left:1557px;top:102px;width:120px;height:100px;overflow:hidden"><div class="t" style="left:-6px;top:23px;height:60px;line-height:60px;font-size:31px;color:#548AF7;-webkit-mask-image:linear-gradient(90deg,rgba(0,0,0,0.15),#000 40px)">cala</div></div><svg style="left:1712px;top:130px;" width="46" height="46" viewBox="0 0 46 46" fill="none" stroke="#CED0D6" stroke-width="3" stroke-linecap="round" stroke-linejoin="round"><path d="M38.9 24.4A16 16 0 1 0 25.5 38.8L25.5 24.4Z" fill="#25304A" stroke="none"/><path d="M38.9 24.4A16 16 0 1 0 25.5 38.8" stroke="#4F7DDA" stroke-width="2.8" stroke-linecap="butt"/><path d="M30.6 19.6A8.3 8.3 0 1 0 25.3 30.9" stroke="#4F7DDA" stroke-width="2.8" stroke-linecap="butt"/><path d="M28.5 28L42.5 26.5M28.5 34.5L42.5 33M28.5 41L42.5 39.5" stroke="#C9514F" stroke-width="3"/></svg><div class="t" style="left:1768px;top:125px;height:60px;line-height:60px;font-size:31px;color:#CDD0D5;">Timer.scala</div><svg style="left:2030px;top:130px;" width="46" height="46" viewBox="0 0 46 46" fill="none" stroke="#CED0D6" stroke-width="3" stroke-linecap="round" stroke-linejoin="round"><path d="M11.8 39V12.5Q11.8 9.3 15 9L34.5 6.6V33Q34.5 36.2 31.3 36.5Z" fill="#3A2828" stroke="#C95553" stroke-width="3"/><path d="M11.8 19L34.5 16.4M11.8 29L34.5 26.6" stroke="#C95553" stroke-width="3" stroke-linecap="butt"/></svg><div class="t" style="left:2085px;top:125px;height:60px;line-height:60px;font-size:31px;color:#CDD0D5;">CLINTCSRTest.scala</div><svg style="left:2465px;top:130px;" width="46" height="46" viewBox="0 0 46 46" fill="none" stroke="#CED0D6" stroke-width="3" stroke-linecap="round" stroke-linejoin="round"><path d="M38.9 24.4A16 16 0 1 0 25.5 38.8L25.5 24.4Z" fill="#25304A" stroke="none"/><path d="M38.9 24.4A16 16 0 1 0 25.5 38.8" stroke="#4F7DDA" stroke-width="2.8" stroke-linecap="butt"/><path d="M30.6 19.6A8.3 8.3 0 1 0 25.3 30.9" stroke="#4F7DDA" stroke-width="2.8" stroke-linecap="butt"/><path d="M28.5 28L42.5 26.5M28.5 34.5L42.5 33M28.5 41L42.5 39.5" stroke="#C9514F" stroke-width="3"/></svg><div class="t" style="left:2522px;top:125px;height:60px;line-height:60px;font-size:31px;color:#CDD0D5;">ExecuteTest.scala</div><svg style="left:2873px;top:130px;" width="46" height="46" viewBox="0 0 46 46" fill="none" stroke="#CED0D6" stroke-width="3" stroke-linecap="round" stroke-linejoin="round"><path d="M11.8 39V12.5Q11.8 9.3 15 9L34.5 6.6V33Q34.5 36.2 31.3 36.5Z" fill="#3A2828" stroke="#C95553" stroke-width="3"/><path d="M11.8 19L34.5 16.4M11.8 29L34.5 26.6" stroke="#C95553" stroke-width="3" stroke-linecap="butt"/></svg><div class="t" style="left:2928px;top:125px;height:60px;line-height:60px;font-size:31px;color:#CDD0D5;">CPUTest.scala</div><svg style="left:3228px;top:130px;" width="46" height="46" viewBox="0 0 46 46" fill="none" stroke="#CED0D6" stroke-width="3" stroke-linecap="round" stroke-linejoin="round"><path d="M38.9 24.4A16 16 0 1 0 25.5 38.8L25.5 24.4Z" fill="#25304A" stroke="none"/><path d="M38.9 24.4A16 16 0 1 0 25.5 38.8" stroke="#4F7DDA" stroke-width="2.8" stroke-linecap="butt"/><path d="M30.6 19.6A8.3 8.3 0 1 0 25.3 30.9" stroke="#4F7DDA" stroke-width="2.8" stroke-linecap="butt"/><path d="M28.5 28L42.5 26.5M28.5 34.5L42.5 33M28.5 41L42.5 39.5" stroke="#C9514F" stroke-width="3"/></svg><div class="t" style="left:3284px;top:125px;height:60px;line-height:60px;font-size:31px;color:#DFE1E5;">TimerTest.scala</div><svg style="left:3527px;top:141px;" width="24" height="24" viewBox="0 0 24 24" fill="none" stroke="#CED0D6" stroke-width="3" stroke-linecap="round" stroke-linejoin="round"><path d="M3 3L21 21M21 3L3 21" stroke="#868A91" stroke-width="2.6"/></svg><svg style="left:3615px;top:144px;" width="24" height="16" viewBox="0 0 24 16" fill="none" stroke="#CED0D6" stroke-width="3" stroke-linecap="round" stroke-linejoin="round"><path d="M3 3L12 12L21 3" stroke="#CED0D6" stroke-width="2.8"/></svg><svg style="left:3682px;top:130px" width="24" height="44"><circle cx="12" cy="8" r="3.2" fill="#CED0D6"/><circle cx="12" cy="22" r="3.2" fill="#CED0D6"/><circle cx="12" cy="36" r="3.2" fill="#CED0D6"/></svg><div style="left:1557px;top:590px;width:2183px;height:55px;background:#26282E;"></div><div style="left:1720px;top:205px;width:3px;height:1132px;background:#313438;"></div><div style="left:1763px;top:700px;width:2px;height:637px;background:#313438;"></div><div style="left:1802px;top:755px;width:2px;height:275px;background:#313438;"></div><div style="left:1557px;top:205px;width:2161px;height:1132px;overflow:hidden"><div class="m" style="left:0;top:3px;width:58px;text-align:right;height:55px;line-height:55px;font-size:33.33px;color:#4B5059;transform:scaleX(0.89);transform-origin:100% 50%">1</div><div class="m" style="left:171px;top:3px;height:55px;line-height:55px;font-size:33.33px;color:#BCBEC4"><span style="background:#393B40;color:#8C8F94;display:inline-block;height:55px;line-height:55px;vertical-align:top;margin-top:-3px;padding-top:3px">/.../</span></div><div class="m" style="left:0;top:58px;width:58px;text-align:right;height:55px;line-height:55px;font-size:33.33px;color:#4B5059;transform:scaleX(0.89);transform-origin:100% 50%">14</div><div class="m" style="left:171px;top:58px;height:55px;line-height:55px;font-size:33.33px;color:#BCBEC4"></div><div class="m" style="left:0;top:113px;width:58px;text-align:right;height:55px;line-height:55px;font-size:33.33px;color:#4B5059;transform:scaleX(0.89);transform-origin:100% 50%">15</div><div class="m" style="left:171px;top:113px;height:55px;line-height:55px;font-size:33.33px;color:#BCBEC4"><span style="color:#CF8E6D">package</span> riscv.singlecycle</div><div class="m" style="left:0;top:168px;width:58px;text-align:right;height:55px;line-height:55px;font-size:33.33px;color:#4B5059;transform:scaleX(0.89);transform-origin:100% 50%">16</div><div class="m" style="left:171px;top:168px;height:55px;line-height:55px;font-size:33.33px;color:#BCBEC4"></div><div class="m" style="left:0;top:223px;width:58px;text-align:right;height:55px;line-height:55px;font-size:33.33px;color:#4B5059;transform:scaleX(0.89);transform-origin:100% 50%">17</div><div class="m" style="left:171px;top:223px;height:55px;line-height:55px;font-size:33.33px;color:#BCBEC4"><span style="color:#CF8E6D">import</span> <span style="background:#393B40;color:#8C8F94;display:inline-block;height:55px;line-height:55px;vertical-align:top;margin-top:-3px;padding-top:3px">...</span></div><div class="m" style="left:0;top:278px;width:58px;text-align:right;height:55px;line-height:55px;font-size:33.33px;color:#4B5059;transform:scaleX(0.89);transform-origin:100% 50%">22</div><div class="m" style="left:171px;top:278px;height:55px;line-height:55px;font-size:33.33px;color:#BCBEC4"></div><div class="m" style="left:0;top:333px;width:58px;text-align:right;height:55px;line-height:55px;font-size:33.33px;color:#4B5059;transform:scaleX(0.89);transform-origin:100% 50%">23</div><div class="m" style="left:171px;top:333px;height:55px;line-height:55px;font-size:33.33px;color:#BCBEC4"><span style="color:#CF8E6D">class</span> TimerTest <span style="color:#CF8E6D">extends</span> AnyFlatSpec <span style="color:#CF8E6D">with</span> ChiselScalatestTester {</div><div class="m" style="left:0;top:388px;width:58px;text-align:right;height:55px;line-height:55px;font-size:33.33px;color:#A1A3AB;transform:scaleX(0.89);transform-origin:100% 50%">24</div><div class="m" style="left:171px;top:388px;height:55px;line-height:55px;font-size:33.33px;color:#BCBEC4"></div><div class="m" style="left:0;top:443px;width:58px;text-align:right;height:55px;line-height:55px;font-size:33.33px;color:#4B5059;transform:scaleX(0.89);transform-origin:100% 50%">25</div><div class="m" style="left:171px;top:443px;height:55px;line-height:55px;font-size:33.33px;color:#BCBEC4">  <span style="color:#CF8E6D">class</span> TestTimer <span style="color:#CF8E6D">extends</span> Module {</div><div class="m" style="left:0;top:498px;width:58px;text-align:right;height:55px;line-height:55px;font-size:33.33px;color:#4B5059;transform:scaleX(0.89);transform-origin:100% 50%">26</div><div class="m" style="left:171px;top:498px;height:55px;line-height:55px;font-size:33.33px;color:#BCBEC4">    <span style="color:#CF8E6D">val</span> <span style="color:#C77DBB;font-style:italic;text-decoration:underline wavy #B89A3E;text-decoration-thickness:2px;text-underline-offset:6px;text-decoration-skip-ink:none">io</span> = IO(<span style="color:#CF8E6D">new</span> Bundle {</div><div class="m" style="left:0;top:553px;width:58px;text-align:right;height:55px;line-height:55px;font-size:33.33px;color:#4B5059;transform:scaleX(0.89);transform-origin:100% 50%">27</div><div class="m" style="left:171px;top:553px;height:55px;line-height:55px;font-size:33.33px;color:#BCBEC4">      <span style="color:#CF8E6D">val</span> <span style="color:#C77DBB;font-style:italic;text-decoration:underline wavy #B89A3E;text-decoration-thickness:2px;text-underline-offset:6px;text-decoration-skip-ink:none">debug_limit</span> = Output(UInt(Parameters.<span style="color:#C77DBB;font-style:italic">DataWidth</span>))</div><div class="m" style="left:0;top:608px;width:58px;text-align:right;height:55px;line-height:55px;font-size:33.33px;color:#4B5059;transform:scaleX(0.89);transform-origin:100% 50%">28</div><div class="m" style="left:171px;top:608px;height:55px;line-height:55px;font-size:33.33px;color:#BCBEC4">      <span style="color:#CF8E6D">val</span> <span style="color:#C77DBB;font-style:italic;text-decoration:underline wavy #B89A3E;text-decoration-thickness:2px;text-underline-offset:6px;text-decoration-skip-ink:none">debug_enabled</span> = Output(Bool())</div><div class="m" style="left:0;top:663px;width:58px;text-align:right;height:55px;line-height:55px;font-size:33.33px;color:#4B5059;transform:scaleX(0.89);transform-origin:100% 50%">29</div><div class="m" style="left:171px;top:663px;height:55px;line-height:55px;font-size:33.33px;color:#BCBEC4">      <span style="color:#CF8E6D">val</span> <span style="color:#C77DBB;font-style:italic">bundle</span> = <span style="color:#CF8E6D">new</span> RAMBundle</div><div class="m" style="left:0;top:718px;width:58px;text-align:right;height:55px;line-height:55px;font-size:33.33px;color:#4B5059;transform:scaleX(0.89);transform-origin:100% 50%">30</div><div class="m" style="left:171px;top:718px;height:55px;line-height:55px;font-size:33.33px;color:#BCBEC4"></div><div class="m" style="left:0;top:773px;width:58px;text-align:right;height:55px;line-height:55px;font-size:33.33px;color:#4B5059;transform:scaleX(0.89);transform-origin:100% 50%">31</div><div class="m" style="left:171px;top:773px;height:55px;line-height:55px;font-size:33.33px;color:#BCBEC4">      <span style="color:#CF8E6D">val</span> <span style="color:#C77DBB;font-style:italic;text-decoration:underline wavy #B89A3E;text-decoration-thickness:2px;text-underline-offset:6px;text-decoration-skip-ink:none">write_strobe</span> = Input(UInt(<span style="color:#2AACB8">4</span>.W))</div><div class="m" style="left:0;top:828px;width:58px;text-align:right;height:55px;line-height:55px;font-size:33.33px;color:#4B5059;transform:scaleX(0.89);transform-origin:100% 50%">32</div><div class="m" style="left:171px;top:828px;height:55px;line-height:55px;font-size:33.33px;color:#BCBEC4">    })</div><div class="m" style="left:0;top:883px;width:58px;text-align:right;height:55px;line-height:55px;font-size:33.33px;color:#4B5059;transform:scaleX(0.89);transform-origin:100% 50%">33</div><div class="m" style="left:171px;top:883px;height:55px;line-height:55px;font-size:33.33px;color:#BCBEC4">    <span style="color:#CF8E6D">val</span> <span style="color:#C77DBB;font-style:italic;text-decoration:underline wavy #B89A3E;text-decoration-thickness:2px;text-underline-offset:6px;text-decoration-skip-ink:none">timer</span> = Module(<span style="color:#CF8E6D">new</span> Timer)</div><div class="m" style="left:0;top:938px;width:58px;text-align:right;height:55px;line-height:55px;font-size:33.33px;color:#4B5059;transform:scaleX(0.89);transform-origin:100% 50%">34</div><div class="m" style="left:171px;top:938px;height:55px;line-height:55px;font-size:33.33px;color:#BCBEC4">    <span style="color:#C77DBB;font-style:italic">io</span>.<span style="color:#C77DBB;font-style:italic">debug_limit</span> := <span style="color:#C77DBB;font-style:italic">timer</span>.<span style="color:#C77DBB;font-style:italic">io</span>.<span style="color:#C77DBB;font-style:italic">debug_limit</span></div><div class="m" style="left:0;top:993px;width:58px;text-align:right;height:55px;line-height:55px;font-size:33.33px;color:#4B5059;transform:scaleX(0.89);transform-origin:100% 50%">35</div><div class="m" style="left:171px;top:993px;height:55px;line-height:55px;font-size:33.33px;color:#BCBEC4">    <span style="color:#C77DBB;font-style:italic">io</span>.<span style="color:#C77DBB;font-style:italic">debug_enabled</span> := <span style="color:#C77DBB;font-style:italic">timer</span>.<span style="color:#C77DBB;font-style:italic">io</span>.<span style="color:#C77DBB;font-style:italic">debug_enabled</span></div><div class="m" style="left:0;top:1048px;width:58px;text-align:right;height:55px;line-height:55px;font-size:33.33px;color:#4B5059;transform:scaleX(0.89);transform-origin:100% 50%">36</div><div class="m" style="left:171px;top:1048px;height:55px;line-height:55px;font-size:33.33px;color:#BCBEC4"></div><div class="m" style="left:0;top:1103px;width:58px;text-align:right;height:55px;line-height:55px;font-size:33.33px;color:#4B5059;transform:scaleX(0.89);transform-origin:100% 50%">37</div><div class="m" style="left:171px;top:1103px;height:55px;line-height:55px;font-size:33.33px;color:#BCBEC4">    <span style="color:#C77DBB;font-style:italic">timer</span>.<span style="color:#C77DBB;font-style:italic">io</span>.<span style="color:#C77DBB;font-style:italic">bundle</span> &lt;&gt; <span style="color:#C77DBB;font-style:italic">io</span>.<span style="color:#C77DBB;font-style:italic">bundle</span></div></div><div style="left:1727px;top:597px;width:4px;height:42px;background:#CED0D6;"></div><svg style="left:1682px;top:222px;" width="16" height="24" viewBox="0 0 16 24" fill="none" stroke="#CED0D6" stroke-width="3" stroke-linecap="round" stroke-linejoin="round"><path d="M3 3L12 12L3 21" stroke="#A8ADB5" stroke-width="2.8"/></svg><svg style="left:1682px;top:442px;" width="16" height="24" viewBox="0 0 16 24" fill="none" stroke="#CED0D6" stroke-width="3" stroke-linecap="round" stroke-linejoin="round"><path d="M3 3L12 12L3 21" stroke="#A8ADB5" stroke-width="2.8"/></svg><svg style="left:1628px;top:542px;" width="44" height="44" viewBox="0 0 44 44" fill="none" stroke="#CED0D6" stroke-width="3" stroke-linecap="round" stroke-linejoin="round"><circle cx="16" cy="17" r="14" fill="#589F5E" stroke="none"/><path d="M10 17L15 22L23 12.5" stroke="#fff" stroke-width="3"/><path d="M22.5 20.5L37.5 29.5L22.5 38.5Z" fill="#223022" stroke="#1E1F22" stroke-width="6"/><path d="M22.5 20.5L37.5 29.5L22.5 38.5Z" fill="#223022" stroke="#5FAD65" stroke-width="2.8"/></svg><svg style="left:1749px;top:534px" width="28" height="40"><circle cx="14" cy="13" r="12" fill="#F2C55C"/><path d="M8 24H20V28H8Z" fill="#F2C55C"/><path d="M8 31H20M9 35H19" stroke="#CED0D6" stroke-width="2.5"/></svg><svg style="left:3043px;top:548px;" width="28" height="32" viewBox="0 0 28 32" fill="none" stroke="#CED0D6" stroke-width="3" stroke-linecap="round" stroke-linejoin="round"><circle cx="14" cy="9" r="6.5" stroke="#868A91" stroke-width="2.6"/><path d="M3 30C3 23 8 19 14 19C20 19 25 23 25 30Z" stroke="#868A91" stroke-width="2.6"/></svg><div class="t" style="left:3081px;top:534px;height:60px;line-height:60px;font-size:31px;color:#868A91;">TOKISAKIX\21168</div><svg style="left:2442px;top:658px;" width="28" height="32" viewBox="0 0 28 32" fill="none" stroke="#CED0D6" stroke-width="3" stroke-linecap="round" stroke-linejoin="round"><circle cx="14" cy="9" r="6.5" stroke="#868A91" stroke-width="2.6"/><path d="M3 30C3 23 8 19 14 19C20 19 25 23 25 30Z" stroke="#868A91" stroke-width="2.6"/></svg><div class="t" style="left:2480px;top:644px;height:60px;line-height:60px;font-size:31px;color:#868A91;">TOKISAKIX\21168</div><svg style="left:3380px;top:222px;" width="46" height="30" viewBox="0 0 46 30" fill="none" stroke="#CED0D6" stroke-width="3" stroke-linecap="round" stroke-linejoin="round"><path d="M3 15C8 7 15 3 23 3C31 3 38 7 43 15C38 23 31 27 23 27C15 27 8 23 3 15Z" stroke="#6F737A" stroke-width="2.6"/><circle cx="23" cy="15" r="6" stroke="#6F737A" stroke-width="2.6"/></svg><div style="left:3458px;top:215px;width:2px;height:44px;background:#43454A;"></div><svg style="left:3487px;top:222px" width="34" height="30"><path d="M17 2L32 28H2Z" fill="#F2C55C"/><path d="M17 10V19" stroke="#1E1F22" stroke-width="3.2"/><circle cx="17" cy="23.5" r="1.8" fill="#1E1F22"/></svg><div class="t" style="left:3527px;top:208px;height:60px;line-height:60px;font-size:31px;color:#A8ADB5;">5</div><svg style="left:3562px;top:220px;" width="38" height="38" viewBox="0 0 38 38" fill="none" stroke="#CED0D6" stroke-width="3" stroke-linecap="round" stroke-linejoin="round"><path d="M3 17L12 26L33 3" stroke="#5FB865" stroke-width="3.6"/><path d="M4 33L9 29L14 33L19 29L24 33L29 29" stroke="#5FB865" stroke-width="2.2"/></svg><div class="t" style="left:3603px;top:208px;height:60px;line-height:60px;font-size:31px;color:#A8ADB5;">1</div><svg style="left:3646px;top:228px;" width="24" height="16" viewBox="0 0 24 16" fill="none" stroke="#CED0D6" stroke-width="3" stroke-linecap="round" stroke-linejoin="round"><path d="M3 13L12 4L21 13" stroke="#CED0D6" stroke-width="2.6"/></svg><svg style="left:3698px;top:228px;" width="24" height="16" viewBox="0 0 24 16" fill="none" stroke="#CED0D6" stroke-width="3" stroke-linecap="round" stroke-linejoin="round"><path d="M3 3L12 12L21 3" stroke="#CED0D6" stroke-width="2.6"/></svg><div style="left:3718px;top:272px;width:20px;height:428px;background:rgba(90,92,98,0.55);border-radius:2px"></div><div style="left:3705px;top:457px;width:35px;height:5px;background:#C9A24A;"></div><div style="left:3705px;top:477px;width:35px;height:5px;background:#C9A24A;"></div><div style="left:3705px;top:500px;width:35px;height:5px;background:#C9A24A;"></div><div style="left:3705px;top:562px;width:35px;height:5px;background:#C9A24A;"></div><div style="left:3705px;top:602px;width:35px;height:5px;background:#C9A24A;"></div><div class="t" style="left:1585px;top:1339px;height:60px;line-height:60px;font-size:31px;color:#B0B3B8;">TimerTest</div><div class="t" style="left:133px;top:1423px;height:60px;line-height:60px;font-size:31px;color:#DFE1E5;font-weight:bold">运行</div><svg style="left:266px;top:1436px" width="40" height="36" viewBox="0 0 46 42">
<path d="M16 1 L16 31 L1 16 Z" fill="#C5673C"/>
<path d="M22 1 L22 20 L37 20 Z" fill="#5F9D4F"/>
<path d="M22 23 L44 19 L44 25 L22 29Z M22 31 L44 27 L44 33 L22 37Z M22 39 L44 35 L44 39 L22 42Z" fill="#B5342F"/>
</svg><div class="t" style="left:314px;top:1423px;height:60px;line-height:60px;font-size:31px;color:#DFE1E5;">TimerTest</div><svg style="left:481px;top:1442px;" width="24" height="24" viewBox="0 0 24 24" fill="none" stroke="#CED0D6" stroke-width="3" stroke-linecap="round" stroke-linejoin="round"><path d="M3 3L21 21M21 3L3 21" stroke="#868A91" stroke-width="2.6"/></svg><div style="left:233px;top:1495px;width:296px;height:6px;background:#595C62;border-radius:3px"></div><svg style="left:3610px;top:1429px" width="24" height="44"><circle cx="12" cy="8" r="3.2" fill="#CED0D6"/><circle cx="12" cy="22" r="3.2" fill="#CED0D6"/><circle cx="12" cy="36" r="3.2" fill="#CED0D6"/></svg><div style="left:3667px;top:1450px;width:38px;height:3px;background:#CED0D6;"></div><svg style="left:135px;top:1525px;" width="42" height="42" viewBox="0 0 42 42" fill="none" stroke="#CED0D6" stroke-width="3" stroke-linecap="round" stroke-linejoin="round"><path d="M30 8L30 2M30 8H24M31 9C28 5 24 4 19 4C11 4 4 11 4 19C4 27 11 33 18 33" stroke-width="3"/><path d="M22 20V38L37 29Z" fill="#243024" stroke="#5FB865" stroke-width="3"/></svg><svg style="left:201px;top:1525px;" width="42" height="42" viewBox="0 0 42 42" fill="none" stroke="#CED0D6" stroke-width="3" stroke-linecap="round" stroke-linejoin="round"><path d="M30 8V2M30 8H24M31 9C28 5 24 4 19 4C11 4 4 11 4 19C4 27 11 33 18 33" stroke="#5E5F62" stroke-width="3"/><circle cx="29" cy="29" r="8" fill="#5E5F62" stroke="none"/></svg><svg style="left:264px;top:1523px;" width="44" height="44" viewBox="0 0 44 44" fill="none" stroke="#CED0D6" stroke-width="3" stroke-linecap="round" stroke-linejoin="round"><path d="M12 12C8 15 6 20 7 25C8 30 11 33 14 35M14 35V29M14 35H8M26 4L28 9M28 9L33 7M28 9C32 11 35 14 36 18" stroke-width="3"/><path d="M22 22V40L37 31Z" fill="#243024" stroke="#5FB865" stroke-width="3"/></svg><div style="left:333px;top:1530px;width:30px;height:30px;background:#5A5B5E;border-radius:4px"></div><div style="left:388px;top:1521px;width:3px;height:48px;background:#43454A;"></div><svg style="left:410px;top:1527px;" width="40" height="36" viewBox="0 0 40 36" fill="none" stroke="#CED0D6" stroke-width="3" stroke-linecap="round" stroke-linejoin="round"><path d="M5 18L14 27L34 8" stroke-width="3.4"/></svg><div style="left:468px;top:1517px;width:54px;height:55px;background:#43454A;border-radius:10px"></div><svg style="left:475px;top:1525px;" width="40" height="40" viewBox="0 0 40 40" fill="none" stroke="#CED0D6" stroke-width="3" stroke-linecap="round" stroke-linejoin="round"><circle cx="20" cy="20" r="16" stroke-width="3"/><path d="M9 31L31 9" stroke-width="3"/></svg><div style="left:535px;top:1521px;width:3px;height:48px;background:#43454A;"></div><svg style="left:559px;top:1525px;" width="44" height="44" viewBox="0 0 44 44" fill="none" stroke="#CED0D6" stroke-width="3" stroke-linecap="round" stroke-linejoin="round"><path d="M10 4V34M3 27L10 34L17 27M22 7H38M22 17H36M24 27H30" stroke-width="3"/><path d="M34 38L42 30V38Z" fill="#CED0D6" stroke-width="1"/></svg><svg style="left:626px;top:1527px;" width="36" height="36" viewBox="0 0 36 36" fill="none" stroke="#CED0D6" stroke-width="3" stroke-linecap="round" stroke-linejoin="round"><path d="M3 8V29Q3 32 6 32H26.5M31 4L16 18.5M16 9V18.5H26" stroke-width="3"/></svg><svg style="left:688px;top:1523px;" width="46" height="46" viewBox="0 0 46 46" fill="none" stroke="#CED0D6" stroke-width="3" stroke-linecap="round" stroke-linejoin="round"><circle cx="20" cy="21" r="16" stroke-width="3"/><path d="M20 11V22L28 26" stroke-width="3"/><path d="M36 40L44 32V40Z" fill="#CED0D6" stroke-width="1"/></svg><div style="left:748px;top:1521px;width:3px;height:48px;background:#43454A;"></div><svg style="left:771px;top:1527px;" width="40" height="36" viewBox="0 0 40 36" fill="none" stroke="#CED0D6" stroke-width="3" stroke-linecap="round" stroke-linejoin="round"><path d="M4 12C4 10 5 9 7 9H12L15 4H25L28 9H33C35 9 36 10 36 12V30C36 32 35 33 33 33H7C5 33 4 32 4 30Z" stroke="#5E6064" stroke-width="3"/><circle cx="20" cy="21" r="6" stroke="#5E6064" stroke-width="3"/></svg><svg style="left:838px;top:1526px;" width="38" height="40" viewBox="0 0 38 40" fill="none" stroke="#CED0D6" stroke-width="3" stroke-linecap="round" stroke-linejoin="round"><path d="M14 9V6C14 4 15 3 17 3H32C34 3 35 4 35 6V34C35 36 34 37 32 37H17C15 37 14 36 14 34V31M3 20H24M18 14L24 20L18 26" stroke="#5E6064" stroke-width="3"/></svg><svg style="left:899px;top:1525px;" width="48" height="44" viewBox="0 0 48 44" fill="none" stroke="#CED0D6" stroke-width="3" stroke-linecap="round" stroke-linejoin="round"><path d="M6 32C4 29 3 26 3 22C3 12 11 5 21 5C31 5 39 12 39 22C39 26 38 29 36 32Z" stroke="#5E6064" stroke-width="3"/><circle cx="19" cy="23" r="3.2" stroke="#5E6064" stroke-width="3"/><path d="M21.5 20.5L28 15" stroke="#5E6064" stroke-width="3"/><path d="M37 40L45 32V40Z" fill="#5E6064" stroke-width="1" stroke="#5E6064"/></svg><svg style="left:973px;top:1523px" width="24" height="44"><circle cx="12" cy="8" r="3.2" fill="#CED0D6"/><circle cx="12" cy="22" r="3.2" fill="#CED0D6"/><circle cx="12" cy="36" r="3.2" fill="#CED0D6"/></svg><div style="left:133px;top:1600px;width:836px;height:60px;background:#43454A;border-radius:10px"></div><svg style="left:141px;top:1622px;" width="24" height="16" viewBox="0 0 24 16" fill="none" stroke="#CED0D6" stroke-width="3" stroke-linecap="round" stroke-linejoin="round"><path d="M3 3L12 12L21 3" stroke="#A8ADB5" stroke-width="2.8"/></svg><svg style="left:188px;top:1614px;" width="34" height="30" viewBox="0 0 34 30" fill="none" stroke="#CED0D6" stroke-width="3" stroke-linecap="round" stroke-linejoin="round"><path d="M4 15L12 23L30 5" stroke="#5FB865" stroke-width="4"/></svg><div class="t" style="left:233px;top:1600px;height:60px;line-height:60px;font-size:31px;color:#DFE1E5;">测试结果</div><div class="t" style="left:700px;top:1600px;width:261px;height:60px;line-height:60px;font-size:29px;color:#DFE1E5;text-align:right">9秒 216毫秒</div><svg style="left:1015px;top:1618px;" width="34" height="30" viewBox="0 0 34 30" fill="none" stroke="#CED0D6" stroke-width="3" stroke-linecap="round" stroke-linejoin="round"><path d="M4 15L12 23L30 5" stroke="#5FB865" stroke-width="3.6"/></svg><div class="t" style="left:1062px;top:1602px;height:60px;line-height:60px;font-size:30px;color:#DFE1E5;">1 测试已通过</div><div class="t" style="left:1268px;top:1602px;height:60px;line-height:60px;font-size:30px;color:#868A91;">总计 1 个测试，9秒 216毫秒</div><div style="left:1032px;top:1678px;width:1060px;height:54px;background:#393B40;"></div><div class="m" style="left:1032px;top:1679px;height:55px;line-height:55px;font-size:33.33px;color:#979A9F">C:\Users\26586\.jdks\temurin-17.0.16\bin\java.exe ...</div><div class="m" style="left:1032px;top:1734px;height:55px;line-height:55px;font-size:33.33px;color:#CED0D6">Testing started at 01:26 ...</div><div style="left:3617px;top:1677px;width:26px;height:426px;background:#26272A;"></div><div style="left:3620px;top:1680px;width:20px;height:419px;background:#47484B;"></div><svg style="left:3677px;top:1700px;" width="32" height="36" viewBox="0 0 32 36" fill="none" stroke="#CED0D6" stroke-width="3" stroke-linecap="round" stroke-linejoin="round"><path d="M16 4V32M5 15L16 4L27 15" stroke="#5E6064" stroke-width="2.6"/></svg><svg style="left:3677px;top:1768px;" width="32" height="36" viewBox="0 0 32 36" fill="none" stroke="#CED0D6" stroke-width="3" stroke-linecap="round" stroke-linejoin="round"><path d="M16 4V32M5 21L16 32L27 21" stroke="#5E6064" stroke-width="2.6"/></svg><svg style="left:3675px;top:1835px;" width="38" height="36" viewBox="0 0 38 36" fill="none" stroke="#CED0D6" stroke-width="3" stroke-linecap="round" stroke-linejoin="round"><path d="M3 5H35M3 16H24C30 16 34 18.5 34 23C34 27.5 30 30 25 30H18M22 25.5L17.5 30L22 34.5M3 30H11" stroke-width="2.6"/></svg><svg style="left:3675px;top:1896px;" width="38" height="36" viewBox="0 0 38 36" fill="none" stroke="#CED0D6" stroke-width="3" stroke-linecap="round" stroke-linejoin="round"><path d="M3 6H13M3 17H13M3 28H35M25 4V22M19 16L25 22L31 16" stroke-width="2.6"/></svg><svg style="left:3675px;top:1962px;" width="38" height="38" viewBox="0 0 38 38" fill="none" stroke="#CED0D6" stroke-width="3" stroke-linecap="round" stroke-linejoin="round"><path d="M9 13V5H29V13M9 27H5V15C5 14 6 13 7 13H31C32 13 33 14 33 15V27H29M9 21H29V33H9Z" stroke-width="2.6"/></svg><svg style="left:3677px;top:2026px;" width="34" height="40" viewBox="0 0 34 40" fill="none" stroke="#CED0D6" stroke-width="3" stroke-linecap="round" stroke-linejoin="round"><path d="M3 8H31M12 8V4H22V8M6 8L8 36H26L28 8M14 15V29M20 15V29" stroke-width="2.6"/></svg><svg style="left:3768px;top:128px;" width="52" height="52" viewBox="0 0 52 52" fill="none" stroke="#CED0D6" stroke-width="3" stroke-linecap="round" stroke-linejoin="round"><path d="M14 36V22C14 15 19 10 26 10C33 10 38 15 38 22V36L42 40H10Z M21 44C22 46 24 47 26 47C28 47 30 46 31 44" stroke-width="3.2"/></svg><svg style="left:3800px;top:122px" width="22" height="22"><circle cx="11" cy="11" r="9" fill="#E55765"/></svg><svg style="left:3768px;top:228px;" width="54" height="52" viewBox="0 0 54 52" fill="none" stroke="#CED0D6" stroke-width="3" stroke-linecap="round" stroke-linejoin="round"><path d="M6 28C4 18 10 8 22 8C31 8 38 14 40 21M10 32C9 28 9 25 11 21C13 17 17 15 22 15C27 15 31 18 32 22M19 31C17 27 19 22 24 22" stroke-width="3.2"/><path d="M26 28H46C47 28 48 29 48 30V42C48 43 47 44 46 44V48L40 44H26C25 44 24 43 24 42V30C24 29 25 28 26 28Z" stroke-width="3.2" fill="#2B2D30"/></svg><svg style="left:3770px;top:328px;" width="48" height="50" viewBox="0 0 48 50" fill="none" stroke="#CED0D6" stroke-width="3" stroke-linecap="round" stroke-linejoin="round"><ellipse cx="24" cy="10" rx="19" ry="7" stroke-width="3.2"/><path d="M5 10V40C5 44 13 47 24 47C35 47 43 44 43 40V10M5 20C5 24 13 27 24 27C35 27 43 24 43 20M5 30C5 34 13 37 24 37C35 37 43 34 43 30" stroke-width="3.2"/></svg><svg style="left:3770px;top:430px;" width="48" height="46" viewBox="0 0 48 46" fill="none" stroke="#CED0D6" stroke-width="3" stroke-linecap="round" stroke-linejoin="round"><path d="M18 4L38 8L44 27L30 42L11 38L4 19Z" stroke-width="3.2"/></svg><svg style="left:3768px;top:528px;" width="52" height="48" viewBox="0 0 52 48" fill="none" stroke="#CED0D6" stroke-width="3" stroke-linecap="round" stroke-linejoin="round"><path d="M40 22V9C40 6 38 4 35 4H9C6 4 4 6 4 9V33C4 36 6 38 9 38H28M11 13H19M23 13H33M11 21H15M19 21H33M11 29H27" stroke-width="3.2"/><path d="M38 29L33 35L38 41M44 29L49 35L44 41" stroke-width="3.2"/></svg><svg style="left:3760px;top:620px" width="70" height="70"><path d="M9 41C9 35 12 32 15 31V28H51V31C54 32 57 35 57 41C57 48 46 54 33 54C20 54 9 48 9 41Z" fill="#CED0D6"/><path d="M18 33H48V45C44 48 39 49.5 33 49.5C27 49.5 22 48 18 45Z" fill="#2B2D30"/><rect x="15.5" y="14" width="17" height="17" rx="6.5" fill="#2B2D30" stroke="#CED0D6" stroke-width="4"/><rect x="33.5" y="14" width="17" height="17" rx="6.5" fill="#2B2D30" stroke="#CED0D6" stroke-width="4"/><rect x="26" y="36" width="4.5" height="9" rx="2.2" fill="#CED0D6"/><rect x="36" y="36" width="4.5" height="9" rx="2.2" fill="#CED0D6"/></svg><div style="left:35px;top:2234px;width:20px;height:20px;border:2.6px solid #548AF7;border-radius:4px;background:#25324D"></div><div class="t" style="left:65px;top:2214px;height:60px;line-height:60px;font-size:31px;color:#B4B8BF;">lab2</div><svg style="left:150px;top:2234px;" width="14" height="20" viewBox="0 0 14 20" fill="none" stroke="#CED0D6" stroke-width="3" stroke-linecap="round" stroke-linejoin="round"><path d="M3 3L10 10L3 17" stroke="#B4B8BF" stroke-width="2.4"/></svg><div class="t" style="left:188px;top:2214px;height:60px;line-height:60px;font-size:31px;color:#B4B8BF;">src</div><svg style="left:251px;top:2234px;" width="14" height="20" viewBox="0 0 14 20" fill="none" stroke="#CED0D6" stroke-width="3" stroke-linecap="round" stroke-linejoin="round"><path d="M3 3L10 10L3 17" stroke="#B4B8BF" stroke-width="2.4"/></svg><div style="left:288px;top:2234px;width:20px;height:20px;border:2.6px solid #548AF7;border-radius:4px;background:#25324D"></div><div class="t" style="left:319px;top:2214px;height:60px;line-height:60px;font-size:31px;color:#B4B8BF;">test</div><svg style="left:396px;top:2234px;" width="14" height="20" viewBox="0 0 14 20" fill="none" stroke="#CED0D6" stroke-width="3" stroke-linecap="round" stroke-linejoin="round"><path d="M3 3L10 10L3 17" stroke="#B4B8BF" stroke-width="2.4"/></svg><div class="t" style="left:433px;top:2214px;height:60px;line-height:60px;font-size:31px;color:#B4B8BF;">scala</div><svg style="left:527px;top:2234px;" width="14" height="20" viewBox="0 0 14 20" fill="none" stroke="#CED0D6" stroke-width="3" stroke-linecap="round" stroke-linejoin="round"><path d="M3 3L10 10L3 17" stroke="#B4B8BF" stroke-width="2.4"/></svg><div class="t" style="left:565px;top:2214px;height:60px;line-height:60px;font-size:31px;color:#B4B8BF;">riscv</div><svg style="left:652px;top:2234px;" width="14" height="20" viewBox="0 0 14 20" fill="none" stroke="#CED0D6" stroke-width="3" stroke-linecap="round" stroke-linejoin="round"><path d="M3 3L10 10L3 17" stroke="#B4B8BF" stroke-width="2.4"/></svg><div class="t" style="left:690px;top:2214px;height:60px;line-height:60px;font-size:31px;color:#B4B8BF;">singlecycle</div><svg style="left:867px;top:2234px;" width="14" height="20" viewBox="0 0 14 20" fill="none" stroke="#CED0D6" stroke-width="3" stroke-linecap="round" stroke-linejoin="round"><path d="M3 3L10 10L3 17" stroke="#B4B8BF" stroke-width="2.4"/></svg><svg style="left:903px;top:2221px;" width="46" height="46" viewBox="0 0 46 46" fill="none" stroke="#CED0D6" stroke-width="3" stroke-linecap="round" stroke-linejoin="round"><path d="M38.9 24.4A16 16 0 1 0 25.5 38.8L25.5 24.4Z" fill="#25304A" stroke="none"/><path d="M38.9 24.4A16 16 0 1 0 25.5 38.8" stroke="#4F7DDA" stroke-width="2.8" stroke-linecap="butt"/><path d="M30.6 19.6A8.3 8.3 0 1 0 25.3 30.9" stroke="#4F7DDA" stroke-width="2.8" stroke-linecap="butt"/><path d="M28.5 28L42.5 26.5M28.5 34.5L42.5 33M28.5 41L42.5 39.5" stroke="#C9514F" stroke-width="3"/></svg><div class="t" style="left:955px;top:2214px;height:60px;line-height:60px;font-size:31px;color:#B4B8BF;">TimerTest.scala</div><svg style="left:3010px;top:2222px" width="48" height="44"><path d="M14 12C14 7 17 4 22 4C27 4 30 7 30 12C30 17 27 20 22 20C17 20 14 17 14 12Z M26 8C28 5 31 4 34 4C40 4 43 8 43 13V16L37 18" fill="none" stroke="#CED0D6" stroke-width="3.4"/><path d="M14 18C9 21 7 24 7 28C7 33 12 36 18 38L22 38L26 25L18 19Z" fill="#CED0D6"/><circle cx="32.4" cy="30.2" r="10" fill="#27A644"/><path d="M27.5 30L31 33.5L37 27" fill="none" stroke="#2B2D30" stroke-width="2.6" stroke-linecap="round"/></svg><svg style="left:3096px;top:2229px" width="38" height="32"><rect x="5" y="1" width="26" height="30" fill="#22301F"/><path d="M8 2H4C3 2 2 3 2 4V28C2 29 3 30 4 30H8M28 2H32C33 2 34 3 34 4V28C34 29 33 30 32 30H28" fill="none" stroke="#5FAD65" stroke-width="3" stroke-linecap="round"/><path d="M12 6H24M18 6V26" stroke="#DFE1E5" stroke-width="2.2"/></svg><svg style="left:3176px;top:2227px;" width="38" height="38" viewBox="0 0 38 38" fill="none" stroke="#CED0D6" stroke-width="3" stroke-linecap="round" stroke-linejoin="round"><circle cx="19" cy="18" r="16" stroke-width="3"/><circle cx="19" cy="18" r="4" stroke-width="2.6"/><path d="M22 15L28 9" stroke-width="2.8"/></svg><div class="t" style="left:3256px;top:2214px;height:60px;line-height:60px;font-size:31px;color:#B4B8BF;">24:1</div><div class="t" style="left:3356px;top:2214px;height:60px;line-height:60px;font-size:31px;color:#B4B8BF;">LF</div><div class="t" style="left:3426px;top:2214px;height:60px;line-height:60px;font-size:31px;color:#B4B8BF;">UTF-8</div><svg style="left:3554px;top:2160px" width="286" height="120" viewBox="0 0 286 120">
<defs><clipPath id="imec"><rect x="0" y="0" width="286" height="120" rx="27"/></clipPath>
<filter id="bl"><feGaussianBlur stdDeviation="1.2"/></filter></defs>
<g clip-path="url(#imec)">
<rect width="286" height="120" fill="#0B0A0C"/>
<ellipse cx="72" cy="96" rx="18" ry="22" fill="#6A4A1A" opacity="0.35" filter="url(#bl)"/>
<g filter="url(#bl)">
<path d="M8 0C20 8 34 12 50 18L62 24L40 26C26 20 14 10 8 0Z" fill="#9A8A80" opacity="0.5" transform="translate(55 5)"/>
<ellipse cx="118" cy="37" rx="52" ry="12" transform="rotate(27 120 38)" fill="#E8DCD6"/>
<ellipse cx="90" cy="23" rx="9" ry="8" transform="rotate(27 90 23)" fill="#E2541E"/>
<ellipse cx="128" cy="44" rx="20" ry="11" transform="rotate(27 128 44)" fill="#E2541E"/>
<ellipse cx="150" cy="54" rx="10" ry="7" transform="rotate(27 150 54)" fill="#EC6A30"/>
<ellipse cx="152" cy="59" rx="8" ry="5" transform="rotate(27 152 59)" fill="#F2EEEA"/>
<ellipse cx="208" cy="54" rx="50" ry="10" transform="rotate(72 208 54)" fill="#E45A22"/>
<ellipse cx="198" cy="22" rx="14" ry="4" transform="rotate(72 198 22)" fill="#F0E8E2"/>
<ellipse cx="212" cy="72" rx="7" ry="5" transform="rotate(72 212 72)" fill="#EEDDD4"/>
<path d="M205 4L258 2L262 40L248 52L234 38L218 24Z" fill="#E2702E" opacity="0.9"/>
<path d="M208 4L232 3L228 18L214 22Z" fill="#EDE0D6"/>
<path d="M170 74C185 66 210 68 230 84M196 100C215 88 240 84 270 74M238 44C255 38 270 34 282 38" stroke="#B8B0A8" stroke-width="2" fill="none" opacity="0.6"/>
<ellipse cx="140" cy="112" rx="20" ry="6" fill="#C9C0B8" opacity="0.4"/>
</g>

<circle cx="105" cy="62" r="3" fill="#FFF6D8"/><circle cx="178" cy="83" r="3" fill="#FFF6D8"/><circle cx="232" cy="70" r="2.5" fill="#FFF6D8"/><circle cx="262" cy="100" r="3" fill="#FFF6D8"/>
</g>
<text x="29" y="34" font-size="29" fill="#fff">中</text>
<path d="M27 54L36 49C38 52 42 52 44 49L53 54L50 61L46 60V73H34V60L30 61Z" fill="#fff"/>
<text x="25" y="113" font-size="34" font-weight="bold" font-style="italic" fill="#C8502D" font-family="Liberation Sans">S</text>
</svg></body></html>
